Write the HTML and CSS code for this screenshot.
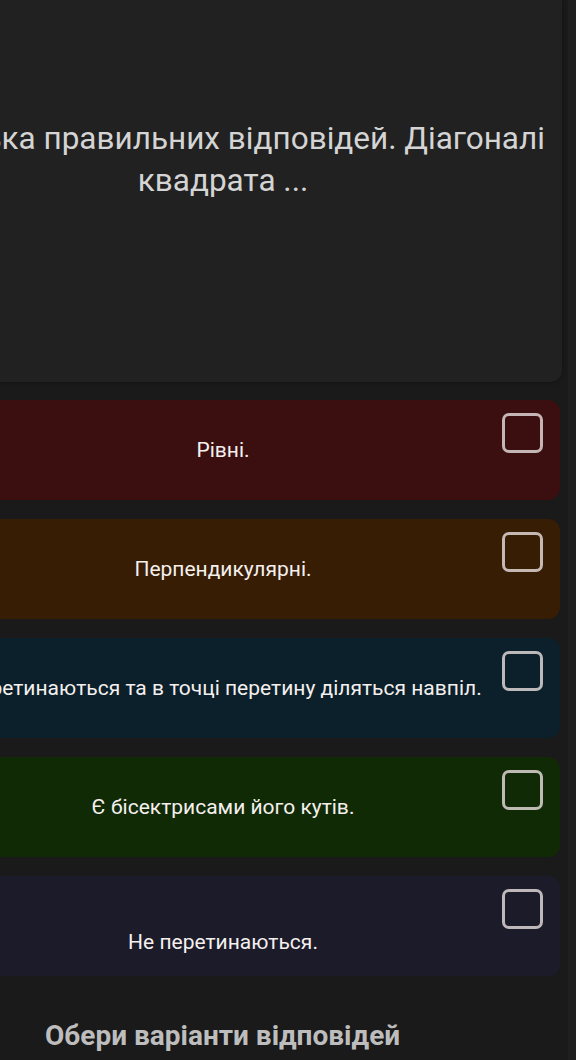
FILE: index.html
```html
<!DOCTYPE html>
<html lang="uk">
<head>
<meta charset="utf-8">
<title>Тест</title>
<link rel="stylesheet" href="styles.css">
</head>
<body>
<div class="screen">
  <main class="main">
    <section class="question">
      <p class="question-text"><span class="line">Декілька правильних відповідей. Діагоналі</span><br><span class="line">квадрата ...</span></p>
    </section>
    <ul class="answers">
      <li class="answer answer-red"><span class="answer-text">Рівні.</span><span class="check"></span></li>
      <li class="answer answer-orange"><span class="answer-text">Перпендикулярні.</span><span class="check"></span></li>
      <li class="answer answer-blue"><span class="answer-text">Перетинаються та в точці перетину діляться навпіл.</span><span class="check"></span></li>
      <li class="answer answer-green"><span class="answer-text">Є бісектрисами його кутів.</span><span class="check"></span></li>
      <li class="answer answer-navy"><span class="answer-text answer-text-low">Не перетинаються.</span><span class="check"></span></li>
    </ul>
    <h2 class="hint">Обери варіанти відповідей</h2>
  </main>
  <div class="rail"></div>
</div>
</body>
</html>
```
FILE: styles.css
```css
html, body {
  margin: 0;
  padding: 0;
}
body {
  background: #1a1a1a;
  font-family: Roboto, "Noto Sans", "Liberation Sans", sans-serif;
  height: 1060px;
  overflow: hidden;
}
.screen {
  display: flex;
  width: 576px;
  height: 1060px;
  overflow: hidden;
}
.main {
  width: 568px;
  flex: none;
  display: flex;
  flex-direction: column;
  overflow: hidden;
}
.rail {
  flex: 1;
  background: #1f1f1f;
}
.question {
  margin: 0 6px 0 -400px;
  padding: 118px 0 180px 300px;
  background: #212121;
  border-radius: 0 0 12px 12px;
  box-shadow: 0 0 4px rgba(0, 0, 0, 0.35);
}
.question-text {
  margin: 0;
  width: 646px;
  font-size: 31.5px;
  line-height: 42px;
  color: #d4d4d4;
  text-align: center;
  white-space: nowrap;
  display: flex;
  flex-direction: column;
  align-items: center;
}
.question-text br {
  display: none;
}
.answers {
  list-style: none;
  margin: 18px 8px 0 -56px;
  padding: 0;
  display: flex;
  flex-direction: column;
  gap: 19px;
}
.answer {
  height: 100px;
  display: flex;
  padding-right: 17px;
  border-radius: 12px;
}
.answer-red { background: #3b0f10; }
.answer-orange { background: #371d03; }
.answer-blue { background: #0b202a; }
.answer-green { background: #102a05; }
.answer-navy { background: #1b1b2a; }
.answer-text {
  flex: 1;
  align-self: center;
  text-align: center;
  font-size: 21px;
  line-height: 24px;
  color: #f5f0ee;
  white-space: nowrap;
}
.answer-text-low {
  padding-top: 32px;
}
.check {
  flex: none;
  width: 35px;
  height: 34px;
  margin-top: 13px;
  border: 3px solid rgba(228, 220, 220, 0.82);
  border-radius: 7px;
}
.hint {
  margin: 43px 0 0 45px;
  font-size: 28px;
  line-height: 34px;
  font-weight: 700;
  color: #bdbdbd;
  white-space: nowrap;
}
```
